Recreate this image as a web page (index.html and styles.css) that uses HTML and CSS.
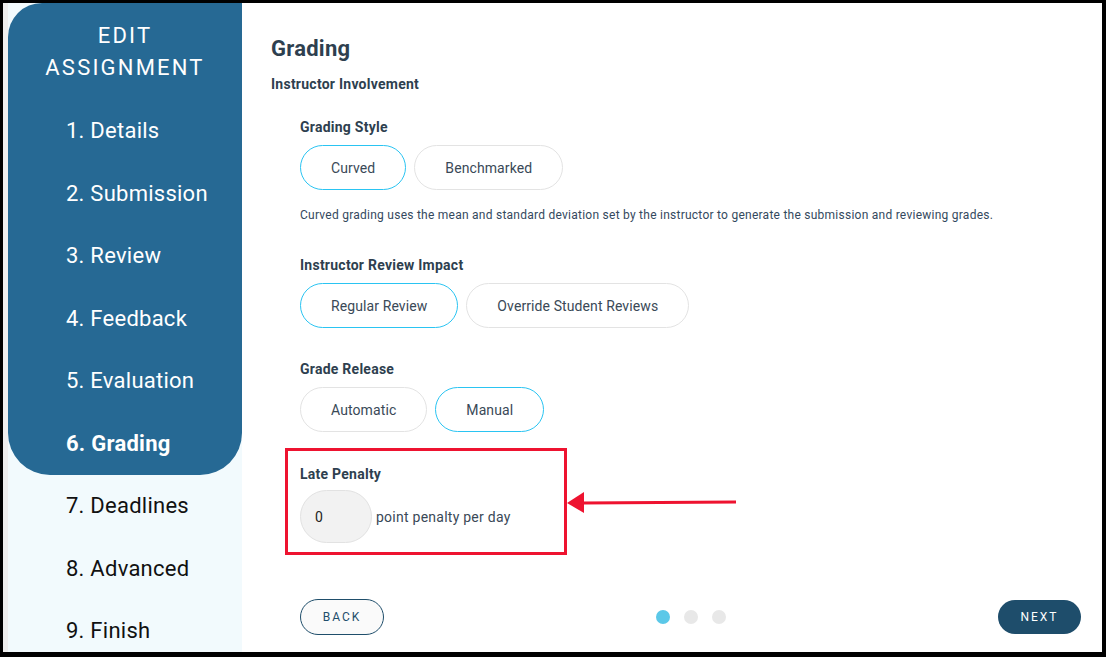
FILE: index.html
```html
<!DOCTYPE html>
<html>
<head>
<meta charset="utf-8">
<link rel="stylesheet" href="styles.css">
</head>
<body>
<div class="frame">
  <div class="strip"></div>
  <aside class="sidebar">
    <div class="nav-active-block">
      <div class="title">EDIT<br>ASSIGNMENT</div>
      <div class="nav-item light">1. Details</div>
      <div class="nav-item light">2. Submission</div>
      <div class="nav-item light">3. Review</div>
      <div class="nav-item light">4. Feedback</div>
      <div class="nav-item light">5. Evaluation</div>
      <div class="nav-item light current">6. Grading</div>
    </div>
    <div class="nav-rest">
      <div class="nav-item">7. Deadlines</div>
      <div class="nav-item">8. Advanced</div>
      <div class="nav-item">9. Finish</div>
    </div>
  </aside>
  <main class="main">
    <h1 class="heading">Grading</h1>
    <h2 class="subheading">Instructor Involvement</h2>

    <section class="group first">
      <div class="label">Grading Style</div>
      <div class="options">
        <button class="pill selected">Curved</button>
        <button class="pill">Benchmarked</button>
      </div>
      <p class="desc">Curved grading uses the mean and standard deviation set by the instructor to generate the submission and reviewing grades.</p>
    </section>

    <section class="group after-desc">
      <div class="label">Instructor Review Impact</div>
      <div class="options">
        <button class="pill selected">Regular Review</button>
        <button class="pill">Override Student Reviews</button>
      </div>
    </section>

    <section class="group after-opts">
      <div class="label">Grade Release</div>
      <div class="options">
        <button class="pill">Automatic</button>
        <button class="pill selected">Manual</button>
      </div>
    </section>

    <section class="late-box">
      <div class="label">Late Penalty</div>
      <div class="penalty-row">
        <div class="num-input">0</div>
        <span class="penalty-text">point penalty per day</span>
      </div>
    </section>

    <svg class="arrow" width="172" height="30" viewBox="0 0 172 30">
      <polygon points="1,15 18,4 18,25" fill="#ee1330"/>
      <line x1="17" y1="15" x2="170" y2="14" stroke="#ee1330" stroke-width="3"/>
    </svg>

    <footer class="footer">
      <button class="btn-back">BACK</button>
      <div class="dots">
        <span class="dot active"></span>
        <span class="dot"></span>
        <span class="dot"></span>
      </div>
      <button class="btn-next">NEXT</button>
    </footer>
  </main>
</div>
</body>
</html>
```

FILE: styles.css
```css
* { box-sizing: border-box; }

html, body {
  margin: 0;
  padding: 0;
  background: #000;
  width: 1106px;
  height: 657px;
  overflow: hidden;
  font-family: Roboto, "Liberation Sans", Arial, sans-serif;
  letter-spacing: 0.25px;
}

.frame {
  margin: 3px 4px 0 3px;
  height: 649px;
  display: flex;
  background: #fff;
}

.strip {
  width: 5px;
  background: #eeeeee;
  flex: none;
}

.sidebar {
  width: 234px;
  flex: none;
  background: #f2fafd;
  display: flex;
  flex-direction: column;
}

.nav-active-block {
  background: #266994;
  border-radius: 34px 0 42px 42px;
  height: 472px;
  padding-top: 17px;
}

.nav-rest {
  padding-top: 0;
}

.title {
  color: #fff;
  text-align: center;
  font-size: 22px;
  line-height: 32px;
  letter-spacing: 2.2px;
  margin-bottom: 16px;
}

.nav-item {
  height: 62.5px;
  line-height: 62.5px;
  padding-left: 58px;
  font-size: 22px;
  color: #111;
}

.nav-item.light { color: #fff; }
.nav-item.current { font-weight: 700; }

.main {
  flex: 1;
  position: relative;
  padding-left: 29px;
  display: flex;
  flex-direction: column;
}

.heading {
  margin: 33px 0 0;
  font-size: 22px;
  line-height: 26px;
  font-weight: 700;
  color: #2e3f4f;
}

.subheading {
  margin: 12px 0 0;
  font-size: 14px;
  line-height: 20px;
  font-weight: 700;
  color: #2e3f4f;
}

.group {
  padding-left: 29px;
}
.group.first { margin-top: 23px; }
.group.after-desc { margin-top: 32px; }
.group.after-opts { margin-top: 31px; }

.label {
  font-size: 14px;
  line-height: 20px;
  font-weight: 700;
  color: #2e3f4f;
}

.options {
  display: flex;
  gap: 8px;
  margin-top: 8px;
}

.pill {
  height: 45px;
  padding: 0 30px;
  border-radius: 23px;
  border: 1px solid #e3e3e3;
  background: #fff;
  font-family: inherit;
  font-size: 14px;
  letter-spacing: 0.1px;
  color: #3a4957;
}

.pill.selected {
  border-color: #2ac4f2;
}

.desc {
  margin: 17px 0 0;
  font-size: 12px;
  line-height: 16px;
  color: #34495e;
}

.late-box {
  margin-top: 16px;
  margin-left: 14px;
  width: 282px;
  border: 3px solid #ee1330;
  padding: 13px 12px 9px;
}

.penalty-row {
  display: flex;
  align-items: center;
  gap: 4px;
  margin-top: 6px;
}

.num-input {
  width: 72px;
  height: 53px;
  border-radius: 27px;
  background: #f2f2f2;
  border: 1px solid #e2e2e2;
  padding-left: 14px;
  display: flex;
  align-items: center;
  font-size: 14px;
  color: #222;
}

.penalty-text {
  font-size: 14px;
  color: #3a4957;
}

.arrow {
  position: absolute;
  left: 324px;
  top: 485px;
}

.footer {
  margin-top: 44px;
  margin-left: 29px;
  margin-right: 21px;
  display: flex;
  align-items: center;
  justify-content: space-between;
}

.btn-back {
  width: 84px;
  height: 36px;
  border-radius: 18px;
  border: 1px solid #1f4e6b;
  background: #fafafa;
  color: #1f4e6b;
  font-family: inherit;
  font-size: 12px;
  letter-spacing: 2px;
}

.btn-next {
  width: 83px;
  height: 34px;
  border-radius: 17px;
  border: none;
  background: #1e4d6b;
  color: #fff;
  font-family: inherit;
  font-size: 12px;
  letter-spacing: 2px;
}

.dots {
  display: flex;
  gap: 14px;
}

.dot {
  width: 14px;
  height: 14px;
  border-radius: 50%;
  background: #e8e8e8;
}

.dot.active { background: #5bc8e8; }
```
